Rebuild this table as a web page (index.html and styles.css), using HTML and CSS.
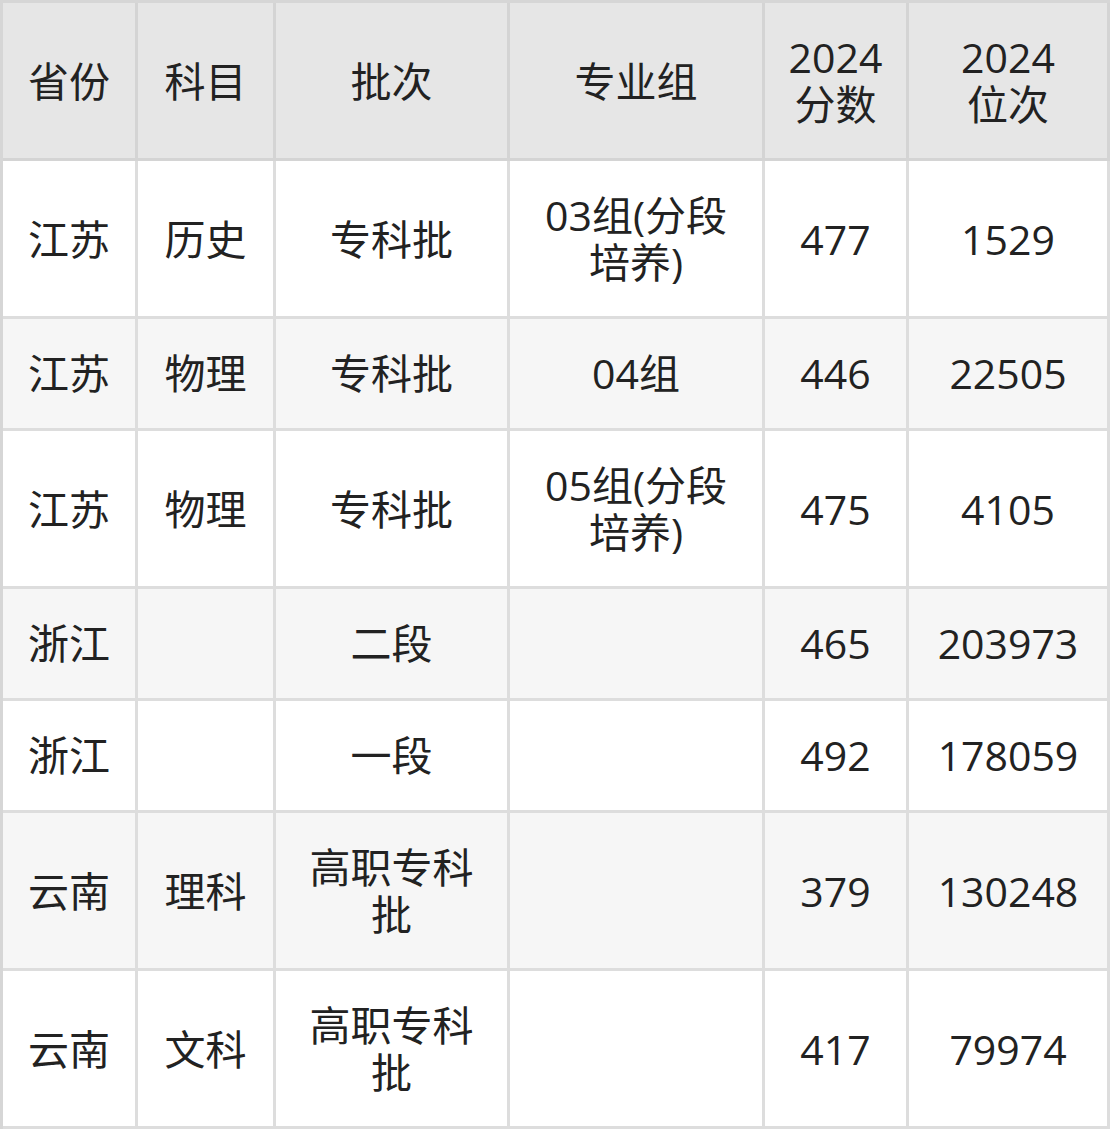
FILE: index.html
```html
<!DOCTYPE html>
<html lang="zh-CN">
<head>
<meta charset="utf-8">
<title>分数线</title>
<link rel="stylesheet" href="styles.css">
</head>
<body>
<table class="score-table">
  <colgroup>
    <col class="c1"><col class="c2"><col class="c3"><col class="c4"><col class="c5"><col class="c6">
  </colgroup>
  <thead>
    <tr class="tall">
      <th>省份</th><th>科目</th><th>批次</th><th>专业组</th><th>2024<br>分数</th><th>2024<br>位次</th>
    </tr>
  </thead>
  <tbody>
    <tr class="tall">
      <td>江苏</td><td>历史</td><td>专科批</td><td>03组(分段<br>培养)</td><td>477</td><td>1529</td>
    </tr>
    <tr class="alt">
      <td>江苏</td><td>物理</td><td>专科批</td><td>04组</td><td>446</td><td>22505</td>
    </tr>
    <tr class="tall">
      <td>江苏</td><td>物理</td><td>专科批</td><td>05组(分段<br>培养)</td><td>475</td><td>4105</td>
    </tr>
    <tr class="alt">
      <td>浙江</td><td></td><td>二段</td><td></td><td>465</td><td>203973</td>
    </tr>
    <tr>
      <td>浙江</td><td></td><td>一段</td><td></td><td>492</td><td>178059</td>
    </tr>
    <tr class="alt tall">
      <td>云南</td><td>理科</td><td>高职专科<br>批</td><td></td><td>379</td><td>130248</td>
    </tr>
    <tr class="tall">
      <td>云南</td><td>文科</td><td>高职专科<br>批</td><td></td><td>417</td><td>79974</td>
    </tr>
  </tbody>
</table>
</body>
</html>
```
FILE: styles.css
```css
html, body {
  margin: 0;
  padding: 0;
  background: #ffffff;
}

.score-table {
  border-collapse: separate;
  border-spacing: 0;
  table-layout: fixed;
  width: 1110px;
  border-top: 3px solid #d6d6d6;
  border-left: 3px solid #d6d6d6;
  font-family: "Open Sans", "Noto Sans CJK SC", sans-serif;
  font-size: 41px;
  line-height: 47px;
  color: #222222;
}

.c1 { width: 135px; }
.c2 { width: 138px; }
.c3 { width: 234px; }
.c4 { width: 255px; }
.c5 { width: 144px; }
.c6 { width: 201px; }

.score-table th,
.score-table td {
  box-sizing: border-box;
  padding: 31px 4px 31px 4px;
  text-align: center;
  vertical-align: middle;
  font-weight: 400;
  border-right: 3px solid #dddddd;
  border-bottom: 3px solid #dddddd;
  white-space: nowrap;
}

.score-table .tall th,
.score-table .tall td {
  padding-bottom: 30px;
}

.score-table th {
  background: #e6e6e6;
  border-color: #d4d4d4;
}

.score-table .alt td {
  background: #f6f6f6;
}
```
